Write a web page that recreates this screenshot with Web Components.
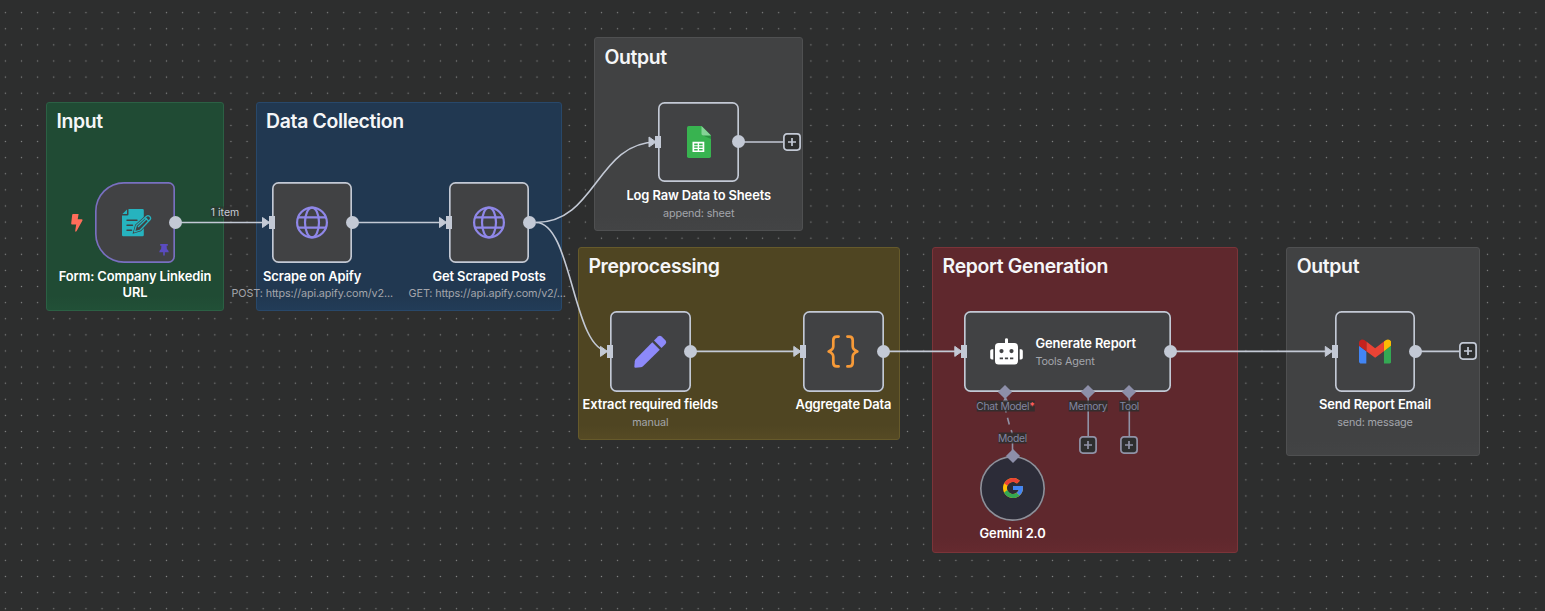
<!DOCTYPE html>
<html lang="en">
<head>
<meta charset="utf-8">
<title>Workflow</title>
<style>
  html, body { margin: 0; height: 100%; overflow: hidden; background: #2d2e2e; font-family: Inter, "Liberation Sans", sans-serif; }
</style>
</head>
<body>
<flow-canvas>
  <sticky-note tone="green" x="46" y="101.7" w="177.7" h="209.2">Input</sticky-note>
  <sticky-note tone="blue" x="255.7" y="101.7" w="306.4" h="209.2">Data Collection</sticky-note>
  <sticky-note tone="gray" x="594" y="37.3" w="209.3" h="193.4">Output</sticky-note>
  <sticky-note tone="olive" x="578" y="246.6" w="322" h="193.2">Preprocessing</sticky-note>
  <sticky-note tone="red" x="932.2" y="246.6" w="306.2" h="306">Report Generation</sticky-note>
  <sticky-note tone="gray" x="1286.3" y="246.6" w="193.7" h="209.3">Output</sticky-note>

  <flow-edges></flow-edges>

  <flow-node x="94.7" y="182.2" trigger out label="Form: Company Linkedin URL"><flow-icon name="form"></flow-icon></flow-node>
  <flow-node x="271.8" y="182.2" in out label="Scrape on Apify" sub="POST: https://api.apify.com/v2..."><flow-icon name="globe"></flow-icon></flow-node>
  <flow-node x="448.8" y="182.2" in out label="Get Scraped Posts" sub="GET: https://api.apify.com/v2/..."><flow-icon name="globe"></flow-icon></flow-node>
  <flow-node x="658.4" y="101.7" in out label="Log Raw Data to Sheets" sub="append: sheet"><flow-icon name="sheets"></flow-icon></flow-node>
  <flow-node x="610" y="311" in out label="Extract required fields" sub="manual"><flow-icon name="pencil"></flow-icon></flow-node>
  <flow-node x="803.2" y="311" in out label="Aggregate Data"><flow-icon name="braces"></flow-icon></flow-node>
  <agent-node x="964.3" y="311" label="Generate Report" sub="Tools Agent"><flow-icon name="robot"></flow-icon></agent-node>
  <flow-node x="1334.7" y="311" in out label="Send Report Email" sub="send: message"><flow-icon name="gmail"></flow-icon></flow-node>
  <model-node x="980.3" y="456" label="Gemini 2.0"><flow-icon name="google"></flow-icon></model-node>

  <add-button x="783" y="133"></add-button>
  <add-button x="1459.3" y="342.3"></add-button>
  <add-button dim x="1079.3" y="435.8"></add-button>
  <add-button dim x="1120.3" y="435.8"></add-button>

  <edge-label light x="225" y="212">1 item</edge-label>
  <edge-label x="1005.5" y="405.7">Chat Model<b slot="mark">*</b></edge-label>
  <edge-label x="1088" y="405.7">Memory</edge-label>
  <edge-label x="1129.3" y="405.7">Tool</edge-label>
  <edge-label x="1012.5" y="438.4">Model</edge-label>
</flow-canvas>

<script>
class Placed extends HTMLElement {
  connectedCallback() {
    if (!this.shadowRoot) this.attachShadow({ mode: 'open' }).innerHTML = this.render();
    for (const [attr, prop] of [['x', 'left'], ['y', 'top'], ['w', 'width'], ['h', 'height']])
      if (this.hasAttribute(attr)) this.style[prop] = this.getAttribute(attr) + 'px';
  }
}

customElements.define('flow-canvas', class extends Placed {
  render() {
    return `<style>
      :host { display: block; position: relative; width: 100vw; height: 100vh; overflow: hidden; background: #2d2e2e; color: #fff; }
      .dots { position: absolute; inset: 0; width: 100%; height: 100%; }
    </style>
    <svg class="dots"><defs><pattern id="p" x="-2.65" y="4.6" width="16.11" height="16.11" patternUnits="userSpaceOnUse"><circle cx="8.05" cy="8.05" r=".7" fill="#858686"/></pattern></defs><rect width="100%" height="100%" fill="url(#p)"/></svg>
    <slot></slot>`;
  }
});

customElements.define('sticky-note', class extends Placed {
  render() {
    return `<style>
      :host { display: block; position: absolute; box-sizing: border-box; padding: 7.7px 9.4px; border: 1px solid var(--edge); border-radius: 3px; background: linear-gradient(to top, var(--glow), var(--fill) 14px); }
      :host([tone=green]) { --fill: #204b34; --edge: #2b6044; --glow: #215037; }
      :host([tone=blue]) { --fill: #213851; --edge: #28486a; --glow: #223c58; }
      :host([tone=gray]) { --fill: #414243; --edge: #4f5051; --glow: #434445; }
      :host([tone=olive]) { --fill: #4f4522; --edge: #665a2b; --glow: #564a24; }
      :host([tone=red]) { --fill: #5f282d; --edge: #7b3439; --glow: #652a2f; }
      h2 { margin: 0; font-size: 19.4px; line-height: 22px; font-weight: 600; letter-spacing: -.33px; color: #f5f6f8; white-space: nowrap; }
    </style><h2><slot></slot></h2>`;
  }
});

const ICONS = {
  form: [30, 28, '0 0 30 28', `<path fill="#26b3bf" d="M6.5 0H20.5Q21.8 0 21.8 1.3V26Q21.8 27.3 20.5 27.3H1.3Q0 27.3 0 26V6.5H5.2Q6.5 6.5 6.5 5.2ZM5 0.4V5H.4Z"/>
    <g stroke="#414244" stroke-width="1.4" fill="none" stroke-linecap="round"><path d="M5 11.3H15M5 16.3H10.5M5 21.2H9.5"/></g>
    <path d="M12.5 22.8L14.3 16.5L24.5 7.2Q26 6 27.5 7.3Q29.5 9 28 10.8L18.3 21Z" fill="#26b3bf" stroke="#414244" stroke-width="2.6"/>
    <path d="M12.5 22.8L14.3 16.5L24.5 7.2Q26 6 27.5 7.3Q29.5 9 28 10.8L18.3 21Z" fill="#414244" stroke="#26b3bf" stroke-width="1.3" stroke-linejoin="round"/><path d="M16 18L25 9.3M23 8.5L26.8 12.3" stroke="#26b3bf" stroke-width="1.3"/>`],
  globe: [32, 33, '.5 0 32 33', `<g fill="none" stroke="#8f87e8" stroke-width="2.2"><circle cx="16.5" cy="16.5" r="14.9"/><ellipse cx="16.5" cy="16.5" rx="7" ry="14.9"/><path d="M2.4 11.3H30.6M2.4 21.7H30.6"/></g>`],
  sheets: [24, 32, '0 0 24 32', `<path fill="#38b350" d="M1.7 0H14.5L24 9.5V30.3Q24 32 22.3 32H1.7Q0 32 0 30.3V1.7Q0 0 1.7 0Z"/><path fill="#2a9140" d="M15 9L24 9.5V13Z"/><path fill="#84d396" d="M14.5 0L24 9.5H16.2Q14.5 9.5 14.5 7.8Z"/>
    <path fill="#fff" fill-rule="evenodd" d="M5.5 15.8H17.3V26H5.5ZM7.2 17.5V19.2H10.7V17.5ZM12.1 17.5V19.2H15.6V17.5ZM7.2 20.3V21.8H10.7V20.3ZM12.1 20.3V21.8H15.6V20.3ZM7.2 22.9V24.4H10.7V22.9ZM12.1 22.9V24.4H15.6V22.9Z"/>`],
  pencil: [33, 33, '0 0 33 33', `<path fill="#8d89fa" d="M18.3 7.2L25.8 14.7L9 31.2Q8 32 6.7 32.2L1.5 32.7Q.3 32.7.3 31.5L.8 26.3Q1 25 1.8 24Z"/><path fill="#8d89fa" d="M20 5.5L24 1.6Q25.8 0 27.6 1.4L31.6 5.4Q33 7.2 31.5 9L27.5 13Z"/>`],
  braces: [32, 33, '0 0 32 33', `<g fill="none" stroke="#f79a38" stroke-width="2.7" stroke-linecap="round" stroke-linejoin="round"><path d="M11.6 1.6H9.8Q6.3 1.6 6.3 5.2V11.3Q6.3 14.6 1.7 16.5Q6.3 18.4 6.3 21.7V27.8Q6.3 31.4 9.8 31.4H11.6"/><path d="M20.4 1.6H22.2Q25.7 1.6 25.7 5.2V11.3Q25.7 14.6 30.3 16.5Q25.7 18.4 25.7 21.7V27.8Q25.7 31.4 22.2 31.4H20.4"/></g>`],
  robot: [33, 27, '0 0 33 27', `<g fill="#fff"><path fill-rule="evenodd" d="M15 5V1.4Q15 .2 16.5 .2Q18 .2 18 1.4V5H24.3Q28 5 28 8.7V23Q28 26.5 24.5 26.5H8.5Q5 26.5 5 23V8.7Q5 5 8.7 5ZM11.5 11A2.1 2.1 0 1 0 11.5 15.2A2.1 2.1 0 1 0 11.5 11ZM21.5 11A2.1 2.1 0 1 0 21.5 15.2A2.1 2.1 0 1 0 21.5 11ZM9.7 19.4V21.2H13V19.4ZM14.9 19.4V21.2H18.1V19.4ZM20 19.4V21.2H23.3V19.4Z"/><path d="M3.3 11.3V21.5H2Q.2 21.5.2 19.7V13.1Q.2 11.3 2 11.3ZM29.7 11.3V21.5H31Q32.8 21.5 32.8 19.7V13.1Q32.8 11.3 31 11.3Z"/></g>`],
  google: [22, 22, '2 2 44 44', `<path fill="#ffc107" d="M43.611 20.083H42V20H24v8h11.303c-1.649 4.657-6.08 8-11.303 8-6.627 0-12-5.373-12-12s5.373-12 12-12c3.059 0 5.842 1.154 7.961 3.039l5.657-5.657C34.046 6.053 29.268 4 24 4 12.955 4 4 12.955 4 24s8.955 20 20 20 20-8.955 20-20c0-1.341-.138-2.65-.389-3.917z"/><path fill="#ea4335" d="m6.306 14.691 6.571 4.819C14.655 15.108 18.961 12 24 12c3.059 0 5.842 1.154 7.961 3.039l5.657-5.657C34.046 6.053 29.268 4 24 4 16.318 4 9.656 8.337 6.306 14.691z"/><path fill="#34a853" d="M24 44c5.166 0 9.86-1.977 13.409-5.192l-6.19-5.238A11.91 11.91 0 0 1 24 36c-5.202 0-9.619-3.317-11.283-7.946l-6.522 5.025C9.505 39.556 16.227 44 24 44z"/><path fill="#4285f4" d="M43.611 20.083H42V20H24v8h11.303a12.04 12.04 0 0 1-4.087 5.571l6.193 5.238C36.971 39.205 44 34 44 24c0-1.341-.138-2.65-.389-3.917z"/>`],
  gmail: [32.3, 25, '52 42 88 66', `<path fill="#4285f4" d="M58 108h14V74L52 59v43c0 3.32 2.69 6 6 6"/><path fill="#34a853" d="M120 108h14c3.32 0 6-2.69 6-6V59l-20 15"/><path fill="#fbbc04" d="M120 48v26l20-15v-8c0-7.42-8.47-11.65-14.4-7.2"/><path fill="#ea4335" d="M72 74V48l24 18 24-18v26L96 92"/><path fill="#c5221f" d="M52 51v8l20 15V48l-5.6-4.2c-5.94-4.45-14.4-.22-14.4 7.2"/>`],
  bolt: [12, 18, '0 0 12 18', `<path fill="#ff6d5a" d="M2 0H7.6L6.7 5.2H10.7Q12 5.4 11.3 6.8L5.5 17.2Q4.2 18.3 4.2 16.8L5.2 10.4H1Q.1 10.3.2 9.2L1.2 .8Q1.4 0 2 0Z"/>`],
  pin: [10, 12, '0 0 10 12', `<path fill="#5a4bc0" d="M1.2 0H8.8V1.8H7.6L7.9 4.9Q9.7 6 9.8 8.2H5.8V11L5 12L4.2 11V8.2H.2Q.3 6 2.1 4.9L2.4 1.8H1.2Z"/>`]
};

customElements.define('flow-icon', class extends Placed {
  render() {
    const [w, h, box, body] = ICONS[this.getAttribute('name')];
    return `<style>:host { display: block; } svg { display: block; } :host([name=form]) { padding: 1px 0 0 4.4px; }</style><svg width="${w}" height="${h}" viewBox="${box}">${body}</svg>`;
  }
});

const NODE_CSS = `
  :host { display: block; position: absolute; width: 80.6px; height: 80.6px; }
  .box { --line: #c3c9d5; box-sizing: border-box; width: 100%; height: 100%; display: flex; align-items: center; justify-content: center; background: #414244; box-shadow: inset 0 0 0 1.65px var(--line); border-radius: 6.5px; }
  .in { position: absolute; left: -3.2px; top: calc(50% - 6.4px); width: 6.2px; height: 12.8px; background: #c3c9d5; }
  .out { position: absolute; right: -6.4px; top: calc(50% - 6.5px); width: 13px; height: 13px; border-radius: 50%; background: #c3c9d5; }
  .name { font-size: 12.9px; line-height: 16px; font-weight: 560; letter-spacing: -.1px; color: #fff; }
  .sub { font-size: 10.8px; line-height: 14px; letter-spacing: -.13px; color: #a3a5ab; white-space: nowrap; }
`;

customElements.define('flow-node', class extends Placed {
  render() {
    const has = a => this.hasAttribute(a);
    const sub = this.getAttribute('sub');
    const clipped = sub && sub.endsWith('...');
    return `<style>${NODE_CSS}
      :host([trigger]) .box { --line: #7870c0; border-radius: 29px 6.5px 6.5px 29px; }
      .caption { position: absolute; top: 86.35px; left: 50%; width: 164px; transform: translateX(-50%); display: flex; flex-direction: column; align-items: center; text-align: center; gap: 2.75px; }
      .clipped { width: 161px; text-align: left; }
      .bolt { position: absolute; left: -24px; top: 31.5px; }
      .pin { position: absolute; left: 64.5px; top: 61.5px; }
    </style>
    <div class="box"><slot></slot></div>
    ${has('trigger') ? '<flow-icon class="bolt" name="bolt"></flow-icon><flow-icon class="pin" name="pin"></flow-icon>' : ''}
    ${has('in') ? '<i class="in"></i>' : ''}${has('out') ? '<i class="out"></i>' : ''}
    <div class="caption"><div class="name">${this.getAttribute('label')}</div>${sub ? `<div class="sub${clipped ? ' clipped' : ''}">${sub}</div>` : ''}</div>`;
  }
});

const DIAMOND = `.gem { position: absolute; width: 10px; height: 10px; background: #8d8fa9; transform: translate(-50%, -50%) rotate(45deg); }`;

customElements.define('agent-node', class extends Placed {
  render() {
    return `<style>${NODE_CSS}${DIAMOND}
      :host { width: 206.4px; }
      .box { justify-content: flex-start; padding-left: 25.8px; gap: 12.3px; }
      .text { display: flex; flex-direction: column; gap: 3px; padding-top: 2px; }
      .gem { top: 80.6px; }
    </style>
    <div class="box"><slot></slot><div class="text"><div class="name">${this.getAttribute('label')}</div><div class="sub">${this.getAttribute('sub')}</div></div></div>
    <i class="in"></i><i class="out"></i>
    <i class="gem" style="left:41.2px"></i><i class="gem" style="left:124px"></i><i class="gem" style="left:165px"></i>`;
  }
});

customElements.define('model-node', class extends Placed {
  render() {
    return `<style>${NODE_CSS}${DIAMOND}
      :host { width: 64.6px; height: 64.6px; }
      .box { --line: #8f8f98; border-radius: 50%; background: #2c2c38; }
      .gem { left: 50%; top: 0; }
      .name { position: absolute; top: 69.8px; left: 50%; transform: translateX(-50%); white-space: nowrap; }
    </style>
    <div class="box"><slot></slot></div><i class="gem"></i><div class="name">${this.getAttribute('label')}</div>`;
  }
});

customElements.define('add-button', class extends Placed {
  render() {
    return `<style>
      :host { display: block; position: absolute; width: 18px; height: 18px; color: #c3c9d5; }
      :host([dim]) { color: #9092a6; }
      svg { display: block; }
    </style>
    <svg width="18" height="18" fill="none" stroke="currentColor"><rect x=".9" y=".9" width="16.2" height="16.2" rx="3" fill="#2d2e2e" stroke-width="1.7"/><path d="M9 5V13M5 9H13" stroke-width="1.7"/></svg>`;
  }
});

customElements.define('edge-label', class extends Placed {
  render() {
    return `<style>
      :host { display: block; position: absolute; transform: translate(-50%, -50%); font-size: 10.3px; line-height: 11px; letter-spacing: -.3px; white-space: nowrap; color: #8286a0; background: rgba(45, 46, 46, .85); }
      :host([light]) { font-size: 10.5px; letter-spacing: 0; color: #c8ccd6; background: rgba(45, 46, 46, .5); }
      ::slotted(b) { color: #ff5c5c; font-weight: 700; }
    </style><slot></slot><slot name="mark"></slot>`;
  }
});

customElements.define('flow-edges', class extends Placed {
  render() {
    const line = (x1, x2, y) => `<path d="M${x1} ${y}H${x2}"/>`;
    const tip = (x, y) => `<path d="M${x - 6.5} ${y - 5}L${x + .5} ${y}L${x - 6.5} ${y + 5}Z" fill="#c3c9d5" stroke-width="1" stroke-linejoin="round"/>`;
    return `<style>:host { display: block; position: absolute; inset: 0; } svg { display: block; width: 100%; height: 100%; }</style>
    <svg fill="none" stroke="#c3c9d5" stroke-width="1.6">
      ${line(175, 270, 222.5)}${line(352, 447, 222.5)}${line(690, 800, 351.4)}${line(884, 962, 351.4)}${line(1170, 1333, 351.4)}
      ${line(739, 783, 142)}${line(1415, 1460, 351.4)}
      <path d="M536 222.5C596.5 222.5 596.5 142 657 142"/>
      <path d="M536 222.5C572.5 222.5 572.5 351.4 609 351.4"/>
      ${tip(269, 222.5)}${tip(446, 222.5)}${tip(655.5, 142)}${tip(607, 351.4)}${tip(800.3, 351.4)}${tip(961.3, 351.4)}${tip(1331.8, 351.4)}
      <g stroke="#9092a6">
        <path d="M1088.2 392V436M1129.3 392V436M1012.5 456V441"/>
        <path d="M1012.3 434L1011.2 430M1009.3 424.5L1007.5 417.8M1006 412.5L1005.6 409"/>
        <path d="M1002.5 402L1005.5 396.5L1008.5 402Z" fill="#9092a6" stroke="none"/>
      </g>
    </svg>`;
  }
});
</script>
</body>
</html>
